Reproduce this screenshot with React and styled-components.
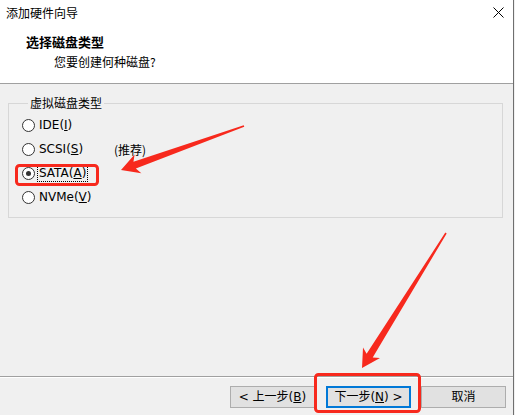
import React from 'react'
import styled, { createGlobalStyle } from 'styled-components'

const GlobalStyle = createGlobalStyle`
  html, body {
    margin: 0;
    padding: 0;
    background: #f0f0f0;
  }
  body {
    font-family: "Noto Sans CJK SC", "Microsoft YaHei", sans-serif;
    font-size: 12px;
    color: #000;
  }
`

const latin = `"DejaVu Sans", "Noto Sans CJK SC", sans-serif`

const Window = styled.div`
  position: relative;
  width: 513px;
  height: 415px;
  border-right: 1px solid #6f6f6f;
  display: flex;
  flex-direction: column;
  background: #f0f0f0;
  overflow: hidden;
`

const TitleBar = styled.div`
  height: 27px;
  display: flex;
  align-items: center;
  justify-content: space-between;
  padding: 0 9px 2px 6px;
  background: #fff;
  box-sizing: border-box;
`

const Title = styled.span`
  font-size: 12px;
  line-height: 16px;
`

const Header = styled.div`
  background: #fff;
  padding: 7px 0 13px;
  border-bottom: 1px solid #a0a0a0;
  display: flex;
  flex-direction: column;
  gap: 4px;
`

const Heading = styled.div`
  padding-left: 26px;
  font-size: 13px;
  font-weight: 700;
  line-height: 16px;
`

const Subtitle = styled.div`
  padding-left: 54px;
  font-size: 12px;
  line-height: 16px;
`

const Body = styled.div`
  flex: 1;
  padding: 11px 10px 0 8px;
`

const GroupBox = styled.fieldset`
  margin: 0;
  padding: 2px 0 8px 13px;
  border: 1px solid #d7d7d7;
  min-width: 0;
`

const Legend = styled.legend`
  margin-left: 6px;
  padding: 0 2px;
  font-size: 12px;
  line-height: 16px;
`

const Option = styled.label`
  height: 24px;
  display: flex;
  align-items: center;
`

const Radio = styled.span`
  width: 11px;
  height: 11px;
  border: 1px solid #333;
  border-radius: 50%;
  background: #fff;
  display: flex;
  align-items: center;
  justify-content: center;
  flex-shrink: 0;

  &::after {
    content: '';
    width: 5px;
    height: 5px;
    border-radius: 50%;
    background: ${p => (p.$checked ? '#333' : 'transparent')};
  }
`

const OptionText = styled.span`
  margin-left: 3px;
  padding: 0 1px;
  min-width: ${p => (p.$wide ? '74px' : 'auto')};
  font-family: ${latin};
  line-height: 15px;
  outline: ${p => (p.$focused ? '1px dotted #000' : 'none')};
`

const Hint = styled.span`
  line-height: 15px;
`

const Divider = styled.div`
  height: 0;
  border-top: 1px solid #a0a0a0;
  border-bottom: 1px solid #fff;
`

const Footer = styled.div`
  height: 37px;
  display: flex;
  justify-content: flex-end;
  align-items: flex-start;
  padding: 8px 7px 0 0;
  box-sizing: border-box;
`

const Button = styled.button`
  width: 85px;
  height: 22px;
  margin-left: ${p => p.$gap || 0}px;
  padding: 0;
  box-sizing: border-box;
  background: #e1e1e1;
  border: ${p => (p.$primary ? '2px solid #0078d7' : '1px solid #adadad')};
  font-family: ${latin};
  font-size: 12px;
  color: #000;
  line-height: 16px;
`

const Annotations = styled.svg`
  position: absolute;
  left: 0;
  top: 0;
  width: 515px;
  height: 415px;
  pointer-events: none;
`

const RED = '#f7291d'

// arrow pointing at (tx,ty) coming from (fx,fy)
function Arrow({ fx, fy, tx, ty }) {
  const dx = fx - tx
  const dy = fy - ty
  const len = Math.sqrt(dx * dx + dy * dy)
  const angle = (Math.atan2(dy, dx) * 180) / Math.PI
  const pts = [
    [0, 0],
    [18, -10],
    [14.5, -3.6],
    [len, -0.8],
    [len, 0.8],
    [14.5, 3.6],
    [18, 10],
  ]
  return (
    <polygon
      transform={`translate(${tx} ${ty}) rotate(${angle})`}
      points={pts.map(p => p.join(',')).join(' ')}
      fill={RED}
    />
  )
}

const options = [
  { label: 'IDE', key: 'I' },
  { label: 'SCSI', key: 'S', hint: '(推荐)' },
  { label: 'SATA', key: 'A', checked: true },
  { label: 'NVMe', key: 'V' },
]

const CloseIcon = () => (
  <svg width="11" height="11" viewBox="0 0 11 11">
    <path d="M0.5 0.5 L10.5 10.5 M10.5 0.5 L0.5 10.5" stroke="#000" strokeWidth="1" fill="none" />
  </svg>
)

export default function App() {
  return (
    <>
      <GlobalStyle />
      <Window>
        <TitleBar>
          <Title>添加硬件向导</Title>
          <CloseIcon />
        </TitleBar>
        <Header>
          <Heading>选择磁盘类型</Heading>
          <Subtitle>您要创建何种磁盘?</Subtitle>
        </Header>
        <Body>
          <GroupBox>
            <Legend>虚拟磁盘类型</Legend>
            {options.map(o => (
              <Option key={o.label}>
                <Radio $checked={o.checked} />
                <OptionText $wide={!!o.hint} $focused={o.checked}>
                  {o.label}(<u>{o.key}</u>)
                </OptionText>
                {o.hint && <Hint>{o.hint}</Hint>}
              </Option>
            ))}
          </GroupBox>
        </Body>
        <Divider />
        <Footer>
          <Button>&lt; 上一步(<u>B</u>)</Button>
          <Button $primary $gap={11}>下一步(<u>N</u>) &gt;</Button>
          <Button $gap={10}>取消</Button>
        </Footer>
        <Annotations viewBox="0 0 515 415">
          <rect x="16.5" y="165.5" width="81" height="19" rx="3" fill="none" stroke={RED} strokeWidth="3" />
          <rect x="315.5" y="374.5" width="104" height="37" rx="3" fill="none" stroke={RED} strokeWidth="3" />
          <Arrow fx={244} fy={126} tx={121} ty={170} />
          <Arrow fx={446} fy={233} tx={362} ty={368} />
        </Annotations>
      </Window>
    </>
  )
}
